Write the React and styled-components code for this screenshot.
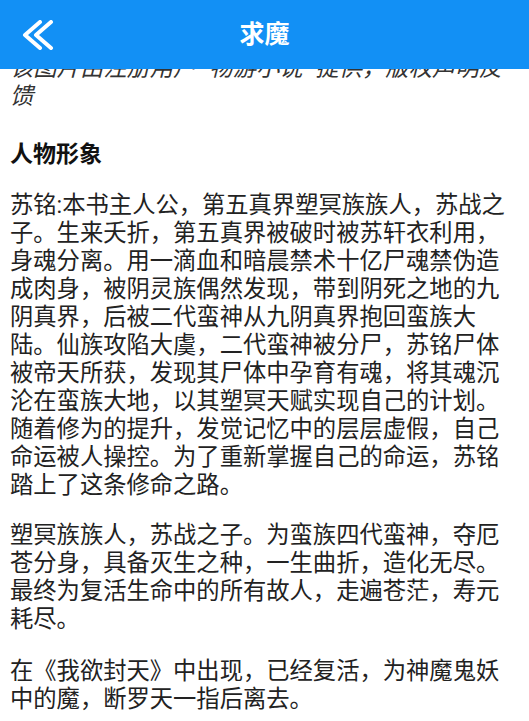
import styled, { createGlobalStyle } from "styled-components";
import { useLayoutEffect, useRef } from "react";

const GlobalStyle = createGlobalStyle`
  html, body {
    margin: 0;
    padding: 0;
    background: #fff;
  }
  body {
    font-family: Roboto, "Noto Sans CJK SC", sans-serif;
  }
`;

const Screen = styled.div`
  height: 100vh;
  display: flex;
  flex-direction: column;
  background: #fff;
`;

const TopBar = styled.header`
  flex: none;
  height: 69px;
  background: #1290f5;
  display: grid;
  grid-template-columns: 1fr auto 1fr;
  align-items: center;
`;

const BackButton = styled.button`
  justify-self: start;
  border: none;
  background: none;
  padding: 0 0 0 22px;
  margin: 0;
  display: flex;
  align-items: center;
  cursor: pointer;
`;

const Title = styled.h1`
  margin: 0;
  color: #fff;
  font-size: 25px;
  font-weight: 700;
  line-height: 30px;
`;

const ScrollArea = styled.main`
  flex: 1;
  overflow-y: auto;
  scrollbar-width: none;
  padding: 0 10px 20px 10px;
  &::-webkit-scrollbar {
    display: none;
  }
`;

const Caption = styled.p`
  margin: 0;
  font-size: 23.3px;
  line-height: 28px;
  font-style: italic;
  color: #333;
`;

const Heading = styled.h2`
  margin: 31px 0 0;
  font-size: 23px;
  line-height: 28px;
  font-weight: 700;
  color: #111;
`;

const Paragraph = styled.p`
  margin: ${({ $gap }) => $gap}px 0 0;
  font-size: 23.3px;
  line-height: 28px;
  color: #222;
`;

const BackIcon = () => (
  <svg width="32" height="30" viewBox="0 0 32 30" fill="none">
    <path
      d="M18 2 L3 15 L18 28 M29 2 L14 15 L29 28"
      stroke="#fff"
      strokeWidth="4"
      strokeLinecap="round"
      strokeLinejoin="round"
    />
  </svg>
);

const paragraphs = [
  {
    gap: 22,
    text: "苏铭:本书主人公，第五真界塑冥族族人，苏战之子。生来夭折，第五真界被破时被苏轩衣利用，身魂分离。用一滴血和暗晨禁术十亿尸魂禁伪造成肉身，被阴灵族偶然发现，带到阴死之地的九阴真界，后被二代蛮神从九阴真界抱回蛮族大陆。仙族攻陷大虞，二代蛮神被分尸，苏铭尸体被帝天所获，发现其尸体中孕育有魂，将其魂沉沦在蛮族大地，以其塑冥天赋实现自己的计划。随着修为的提升，发觉记忆中的层层虚假，自己命运被人操控。为了重新掌握自己的命运，苏铭踏上了这条修命之路。",
  },
  {
    gap: 22,
    text: "塑冥族族人，苏战之子。为蛮族四代蛮神，夺厄苍分身，具备灭生之种，一生曲折，造化无尽。最终为复活生命中的所有故人，走遍苍茫，寿元耗尽。",
  },
  {
    gap: 24,
    text: "在《我欲封天》中出现，已经复活，为神魔鬼妖中的魔，断罗天一指后离去。",
  },
];

const App = () => {
  const scrollRef = useRef(null);

  // the article is shown scrolled a little past the image caption
  useLayoutEffect(() => {
    if (scrollRef.current) scrollRef.current.scrollTop = 15;
  }, []);

  return (
    <Screen>
      <GlobalStyle />
      <TopBar>
        <BackButton aria-label="返回">
          <BackIcon />
        </BackButton>
        <Title>求魔</Title>
        <span />
      </TopBar>
      <ScrollArea ref={scrollRef}>
        <Caption>该图片由注册用户 "物游小说" 提供，版权声明反馈</Caption>
        <Heading>人物形象</Heading>
        {paragraphs.map((p, i) => (
          <Paragraph key={i} $gap={p.gap}>
            {p.text}
          </Paragraph>
        ))}
      </ScrollArea>
    </Screen>
  );
};

export default App;
